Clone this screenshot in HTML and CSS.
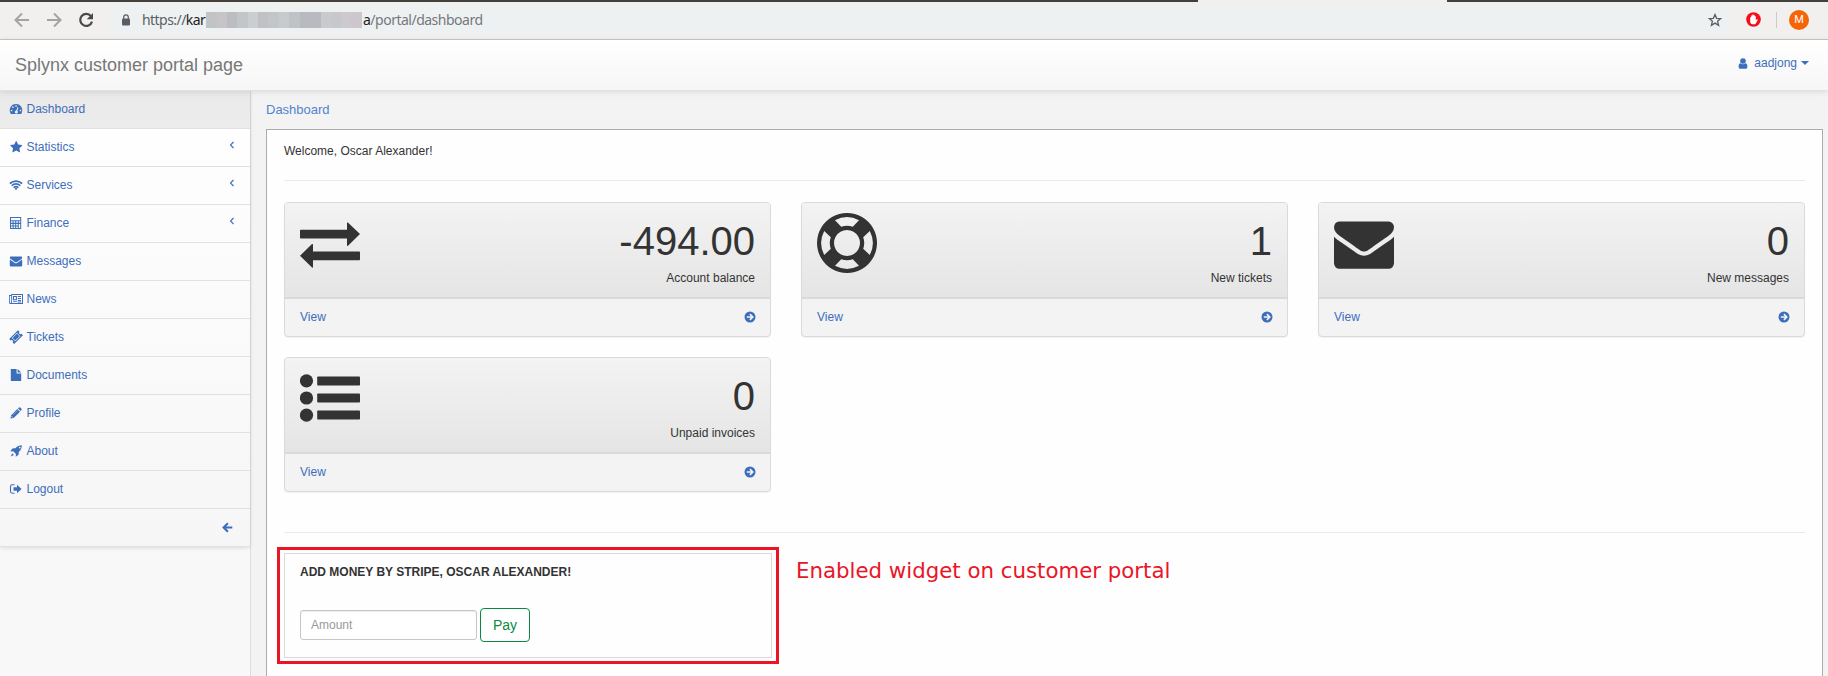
FILE: index.html
```html
<!DOCTYPE html>
<html lang="en">
<head>
<meta charset="utf-8">
<title>Splynx customer portal page</title>
<link rel="stylesheet" href="styles.css">
</head>
<body>
<svg class="defs" width="0" height="0" aria-hidden="true">
  <symbol id="go" viewBox="0 0 12 12"><circle cx="6" cy="6" r="5.5" fill="#3d6ebb"/><path d="M2.800 6H8.600M5.900 3.100 8.800 6 5.900 8.900" fill="none" stroke="#f3f3f3" stroke-width="1.600"/></symbol>
  <symbol id="chev" viewBox="0 0 6 8"><path d="M4.500 1 1.500 4l3 3" fill="none" stroke="#3d6ebb" stroke-width="1.100"/></symbol>
</svg>

<div class="tabstrip"><div class="tab-active"></div></div>
<div class="toolbar">
  <svg class="nav" width="16" height="16" viewBox="0 0 16 16"><path d="M15 8H2M8 1.500 1.500 8 8 14.500" fill="none" stroke="#a3a3a1" stroke-width="2"/></svg>
  <svg class="nav" width="16" height="16" viewBox="0 0 16 16"><path d="M1 8h13M8 1.500 14.500 8 8 14.500" fill="none" stroke="#a3a3a1" stroke-width="2"/></svg>
  <svg class="nav" width="16" height="16" viewBox="0 0 16 16"><path d="M13 4.200A6 6 0 1 0 14 9.600" fill="none" stroke="#4a4a4a" stroke-width="2.200"/><path d="M15 1v6.200H8.800Z" fill="#4a4a4a"/></svg>
  <div class="omnibox">
    <svg class="lock" width="10" height="12" viewBox="0 0 10 12"><rect x="1" y="4.500" width="8" height="7" rx="1" fill="#5a5d63"/><path d="M2.700 5V3.200a2.300 2.300 0 0 1 4.600 0V5" fill="none" stroke="#5a5d63" stroke-width="1.200"/></svg>
    <span class="url url-a">https://<b>kar</b></span>
    <span class="mosaic"></span>
    <span class="url url-b"><b>a</b>/portal/dashboard</span>
    <svg class="bookmark" width="14" height="14" viewBox="0 0 14 14"><path d="M7 1.500 8.600 5.300l4.100.300-3.100 2.700 1 4L7 10.100 3.400 12.300l1-4L1.300 5.600l4.100-.300Z" fill="none" stroke="#5a5d63" stroke-width="1.300"/></svg>
  </div>
  <svg class="blocker" width="15" height="15" viewBox="0 0 15 15"><circle cx="7.500" cy="7.500" r="7.300" fill="#f70d1a"/><path d="M4.200 5.200h1V3.400h1.200v-.800h1.200v.600h1.200v1h1v4l1.200-1.100.800.600-2 3.700q-.600.900-2 .900H6.600q-2-.100-2.400-2Z" fill="#fff"/></svg>
  <span class="sep"></span>
  <span class="avatar">M</span>
</div>

<header class="header">
  <div class="brand">Splynx customer portal page</div>
  <a class="user">
    <svg width="10" height="11" viewBox="0 0 10 11"><circle cx="5" cy="3" r="2.800" fill="#3d6ebb"/><path d="M.6 8.500Q.6 5.400 2.500 5.200 5 7.200 7.500 5.200 9.400 5.400 9.400 8.500 9.400 10.800 8 10.800H2Q.6 10.800.6 8.500Z" fill="#3d6ebb"/></svg>
    <span>aadjong</span><i class="caret"></i>
  </a>
</header>

<div class="page">
  <aside class="sidebar">
    <nav class="menu">
      <a class="item active"><svg viewBox="0 0 14 14"><path fill-rule="evenodd" d="M7 2a6.300 6.300 0 0 1 5.400 9.500q-.200.500-.700.500H2.300q-.500 0-.700-.500A6.300 6.300 0 0 1 7 2ZM6.300 3.200v1.600h1.500V3.200ZM3.200 4.600v1.500h1.500V4.600ZM1.800 7.700v1.500h1.500V7.700ZM10.700 7.700v1.500h1.500V7.700ZM8.600 5.100 7.200 8.600a1.500 1.500 0 1 0 1.100.300l1.200-3.500Z"/></svg><span>Dashboard</span></a>
      <a class="item"><svg viewBox="0 0 1792 1792"><path d="M1728 647q0 22-26 48l-363 354 86 500q1 7 1 20 0 21-10.500 35.500t-30.500 14.500q-19 0-40-12l-449-236-449 236q-22 12-40 12-21 0-31.500-14.500t-10.500-35.500q0-6 2-20l86-500-364-354q-25-27-25-48 0-37 56-46l502-73 225-455q19-41 49-41t49 41l225 455 502 73q56 9 56 46z" transform="translate(100 90) scale(.92)"/></svg><span>Statistics</span><svg class="chev"><use href="#chev"/></svg></a>
      <a class="item"><svg viewBox="0 0 14 14"><path d="M.8 5.500Q7 .6 13.200 5.500M2.700 7.600Q7 4.200 11.300 7.600M4.600 9.600Q7 7.600 9.400 9.600" fill="none" stroke="#3d6ebb" stroke-width="1.700"/><path d="M5.500 10.600Q7 9.600 8.500 10.600L7 12.200Z"/></svg><span>Services</span><svg class="chev"><use href="#chev"/></svg></a>
      <a class="item"><svg viewBox="0 0 14 14"><path fill-rule="evenodd" d="M1 1h11.200v12H1ZM2 2v2.300h9.200V2ZM2 5.300v1.500h1.600V5.300ZM4.600 5.300v1.500h1.600V5.300ZM7.200 5.300v1.500h1.600V5.300ZM9.800 5.300v1.500h1.400V5.300ZM2 7.900v1.500h1.600V7.900ZM4.600 7.900v1.500h1.600V7.900ZM7.200 7.900v1.500h1.600V7.900ZM2 10.500V12h1.600v-1.500ZM4.600 10.500V12h1.600v-1.500ZM7.200 10.500V12h1.600v-1.500ZM9.800 7.900V12h1.400V7.900Z"/></svg><span>Finance</span><svg class="chev"><use href="#chev"/></svg></a>
      <a class="item"><svg viewBox="0 0 14 14"><path d="M.8 5.600 5.500 8.800Q7 9.800 8.500 8.800L13.200 5.600V11.500q0 1-1 1H1.800q-1 0-1-1ZM.8 3.800Q.8 2.500 1.800 2.500H12.200q1 0 1 1.200 0 .8-1 1.500L8 7.900Q7 8.600 6 7.900L1.800 5.100Q.8 4.400.8 3.800Z"/></svg><span>Messages</span></a>
      <a class="item"><svg viewBox="0 0 14 14"><path fill-rule="evenodd" d="M2.200 2H14v9.500q0 .5-.5.500H1.500Q0 12 0 10.500V3H2.200ZM3 3v8H13V3ZM.8 4v6.600q.6.800 1.400 0V4ZM3.900 4h4v4.200h-4ZM5 5v2.200h1.900V5ZM8.800 4H12v1H8.800ZM8.800 6H12v1H8.800ZM8.800 8H12v1H8.800ZM3.900 9.200H7.900v.9h-4ZM8.800 9.600H12v.9H8.800Z"/></svg><span>News</span></a>
      <a class="item"><svg viewBox="0 0 14 14"><g transform="rotate(-45 7 7)"><path fill-rule="evenodd" d="M.8 3.600H13.200V5.700A1.400 1.400 0 0 0 13.200 8.500V10.600H.8V8.500A1.400 1.400 0 0 0 .8 5.700ZM3.400 4.700v4.800h7.200V4.700Z"/><path d="M3.900 5.200h6.200v3.800H3.900Z"/></g></svg><span>Tickets</span></a>
      <a class="item"><svg viewBox="0 0 14 14"><path d="M1.800 1H7.600V5.400H12.200V12.400q0 .6-.6.600H2.400Q1.800 13 1.800 12.400ZM8.600 1 12.200 4.500H8.600Z"/></svg><span>Documents</span></a>
      <a class="item"><svg viewBox="0 0 14 14"><path d="M1.500 12.500 2 9.400 8.300 3.100 11 5.700 4.700 12ZM9 2.400 10 1.500q.7-.5 1.300.100L12.400 2.700q.6.600.1 1.200L11.600 5Z"/><path d="M2.600 10.300 3.800 11.500" stroke="#fafafa" stroke-width=".9"/><path d="M4.300 8.700 8.500 4.500" stroke="#9db7e0" stroke-width=".6"/></svg><span>Profile</span></a>
      <a class="item"><svg viewBox="0 0 14 14"><path fill-rule="evenodd" d="M12.800 1.200Q13 5 9.800 8L9.600 10.800 6.700 12.800 6.900 10 4.200 7.300 1.300 7.500 3.300 4.600 6.200 4.300Q9 1 12.800 1.200ZM10.700 2.700a.8.800 0 1 0 .1 0ZM3.200 9.200 4.900 10.900 1.800 12.400Z"/></svg><span>About</span></a>
      <a class="item"><svg viewBox="0 0 14 14"><path d="M5.600 2.700H3.400Q1.500 2.700 1.500 4.500V9.300Q1.500 11.200 3.400 11.200H5.600" fill="none" stroke="#3d6ebb" stroke-width="1.100"/><path d="M4.500 5.200H8V2.700L12.600 7 8 11.300V8.800H4.500Z"/></svg><span>Logout</span></a>
      <a class="item collapse"><svg viewBox="0 0 11 11"><path d="M10.300 5.500H2M5.900 1.200 1.600 5.500 5.900 9.800" fill="none" stroke="#3d6ebb" stroke-width="2.100"/></svg></a>
    </nav>
  </aside>

  <main class="main">
    <div class="crumb">Dashboard</div>
    <section class="content">
      <div class="welcome">Welcome, Oscar Alexander!</div>
      <div class="cards">
        <article class="card">
          <div class="card-body">
            <svg class="big" viewBox="0 0 60 60"><path d="M0 17.500q0-.8.800-.8H47V10q0-.9.900-.5L60 21 48 32.700q-1 .6-1-.5V25.500H.8Q0 25.500 0 24.700ZM60 39.200q0-.8-.8-.8H13V31.700q0-1.100-1-.6L0 42.800 12 54.500q1 .6 1-.5V47.200H59.200q.8 0 .8-.8Z"/></svg>
            <div class="stat"><div class="num">-494.00</div><div class="lbl">Account balance</div></div>
          </div>
          <a class="card-foot"><span>View</span><svg width="12" height="12"><use href="#go"/></svg></a>
        </article>
        <article class="card">
          <div class="card-body">
            <svg class="big" viewBox="0 0 60 60"><path fill-rule="evenodd" d="M30 0a30 30 0 1 0 .01 0ZM30 17a13 13 0 1 0 .01 0ZM18 7.200A26 26 0 0 1 42 7.200L35.800 13.800A17 17 0 0 0 24.200 13.800ZM52.800 18A26 26 0 0 1 52.800 42L46.200 35.800A17 17 0 0 0 46.200 24.200ZM42 52.800A26 26 0 0 1 18 52.800L24.200 46.200A17 17 0 0 0 35.800 46.200ZM7.200 42A26 26 0 0 1 7.200 18L13.800 24.200A17 17 0 0 0 13.800 35.800Z"/></svg>
            <div class="stat"><div class="num">1</div><div class="lbl">New tickets</div></div>
          </div>
          <a class="card-foot"><span>View</span><svg width="12" height="12"><use href="#go"/></svg></a>
        </article>
        <article class="card">
          <div class="card-body">
            <svg class="big" viewBox="0 0 1792 1792"><path d="M1792 710v794q0 66-47 113t-113 47h-1472q-66 0-113-47t-47-113v-794q44 49 101 87 362 246 497 345 57 42 92.500 65.500t94.500 48 110 24.500h2q51 0 110-24.500t94.500-48 92.500-65.500q170-123 498-345 57-39 100-87zm0-294q0 79-49 151t-122 123q-376 261-468 325-10 7-42.500 31t-54 38.500-52 32.500-57.500 27-50 9h-2q-23 0-50-9t-57.500-27-52-32.500-54-38.500-42.500-31q-91-64-262-182.500t-205-142.500q-62-42-117-115.500t-55-136.500q0-78 41.500-130t118.500-52h1472q65 0 112.500 47t47.500 113z"/></svg>
            <div class="stat"><div class="num">0</div><div class="lbl">New messages</div></div>
          </div>
          <a class="card-foot"><span>View</span><svg width="12" height="12"><use href="#go"/></svg></a>
        </article>
        <article class="card">
          <div class="card-body">
            <svg class="big" viewBox="0 0 60 60"><circle cx="6.500" cy="12.800" r="6.600"/><circle cx="6.500" cy="30" r="6.600"/><circle cx="6.500" cy="47.200" r="6.600"/><rect x="17.200" y="8.500" width="42.800" height="9" rx=".8"/><rect x="17.200" y="25.500" width="42.800" height="9" rx=".8"/><rect x="17.200" y="42.500" width="42.800" height="9" rx=".8"/></svg>
            <div class="stat"><div class="num">0</div><div class="lbl">Unpaid invoices</div></div>
          </div>
          <a class="card-foot"><span>View</span><svg width="12" height="12"><use href="#go"/></svg></a>
        </article>
      </div>
      <div class="widget-row">
        <div class="highlight">
          <div class="widget">
            <div class="widget-title">ADD MONEY BY STRIPE, OSCAR ALEXANDER!</div>
            <div class="form"><input class="amount" type="text" placeholder="Amount"><button class="pay" type="button">Pay</button></div>
          </div>
        </div>
        <div class="note">Enabled widget on customer portal</div>
      </div>
    </section>
  </main>
</div>
</body>
</html>
```
FILE: styles.css
```css
* { box-sizing: border-box; }
body {
  margin: 0;
  width: 1828px;
  height: 676px;
  overflow: hidden;
  display: flex;
  flex-direction: column;
  background: #f3f3f3;
  color: #333;
  font: 12px/17px "Liberation Sans", Arial, sans-serif;
}
svg { display: block; flex: none; }
.defs { position: absolute; }

/* browser chrome */
.tabstrip { height: 2px; flex: none; background: #42403a; padding-left: 1198px; }
.tab-active { width: 249px; height: 2px; background: #f1f0ee; }
.toolbar {
  height: 38px;
  flex: none;
  display: flex;
  align-items: center;
  padding: 0 19px 2px 14px;
  background: #f1f0ee;
  border-bottom: 1px solid #c6c6c4;
}
.nav { margin-right: 16px; }
.omnibox {
  width: 1623px;
  height: 28px;
  margin-left: -2px;
  display: flex;
  align-items: center;
  padding: 0 9px 0 13px;
  border-radius: 14px;
  background: #eef1f2;
}
.url { font: 14px/20px "Noto Sans", sans-serif; color: #75787d; white-space: nowrap; }
.url b { font-weight: 400; color: #222; }
.url-a { width: 64px; margin-left: 11px; overflow: hidden; color: #5c5f64; letter-spacing: -.55px; }
.url-b { margin-left: 1px; letter-spacing: -.5px; }
.mosaic {
  width: 156px;
  height: 16px;
  background: linear-gradient(90deg, #c2c3c5 0 7%, #c7c4c6 7% 13.500%, #bcbdc0 13.500% 20%, #c3c6c9 20% 27%, #cccdcf 27% 33.500%, #bfc1c4 33.500% 40%, #c3c5c7 40% 47%, #c8cbcd 47% 53.500%, #bfc3c6 53.500% 60%, #b9babf 60% 73.500%, #c9cacc 73.500% 80%, #c6c8cb 80% 87%, #cdc9cd 87% 93%, #cbc7cc 93%);
}
.bookmark { margin-left: auto; }
.blocker { margin-left: 15px; }
.sep { width: 1px; height: 16px; margin-left: 15px; background: #cbcbca; }
.avatar {
  width: 20px;
  height: 20px;
  margin-left: 12px;
  border-radius: 50%;
  background: #f56505;
  color: #fff;
  font: 11px/20px Roboto, sans-serif;
  text-align: center;
}

/* portal header */
.header {
  position: relative;
  height: 51px;
  flex: none;
  display: flex;
  justify-content: space-between;
  align-items: center;
  padding: 0 19px 0 15px;
  background: linear-gradient(#fff, #f6f6f6);
  border-bottom: 1px solid #e1e1e1;
  box-shadow: 0 1px 6px rgba(0, 0, 0, .1);
}
.brand { font-size: 18px; line-height: 20px; color: #777; }
.user { display: flex; align-items: center; padding-bottom: 4px; color: #3d6ebb; }
.user span { margin-left: 6px; }
.caret { margin-left: 4px; border: 4px solid transparent; border-top-color: #3d6ebb; border-bottom: 0; }

.page { flex: 1; display: flex; min-height: 0; }
.sidebar { width: 251px; background: #f8f8f8; border-right: 1px solid #ddd; }
.menu { background: linear-gradient(#fff, #f6f6f6); box-shadow: 0 1px 4px rgba(0, 0, 0, .12); border-radius: 0 0 4px 4px; }
.item {
  height: 38px;
  display: flex;
  align-items: center;
  padding: 0 15px 0 9px;
  border-bottom: 1px solid #e1e1e1;
  color: #3d6ebb;
}
.item > svg { width: 14px; height: 14px; margin: 0 0 1px -.5px; fill: #3d6ebb; }
.item span { margin-left: 4px; }
.active { background: linear-gradient(#e9e9e9, #ececec); }
.item > .chev { width: 6px; height: 8px; margin: 0 0 5px auto; }
.collapse { justify-content: flex-end; padding-right: 17px; }
.collapse > svg { width: 11px; height: 11px; }

.main { flex: 1; display: flex; flex-direction: column; padding: 0 5px 0 15px; }
.crumb { height: 38px; flex: none; padding-top: 10px; font-size: 13px; color: #5283cf; }
.content {
  flex: 1;
  padding: 13px 17px 0;
  background: #fefefe;
  border: 1px solid #acacac;
  border-bottom: 0;
}
.welcome { height: 38px; border-bottom: 1px solid #eaeaea; }
.cards {
  display: grid;
  grid-template-columns: repeat(3, 487px);
  gap: 20px 30px;
  padding: 21px 0 40px;
  border-bottom: 1px solid #eaeaea;
}
.card {
  height: 135px;
  overflow: hidden;
  border: 1px solid #dadada;
  border-radius: 4px;
  background: #f3f3f3;
  box-shadow: 0 1px 1px rgba(0, 0, 0, .05);
}
.card-body {
  height: 96px;
  display: flex;
  justify-content: space-between;
  padding: 9px 15px 0;
  background: linear-gradient(#f3f3f3, #e5e5e5);
  border-bottom: 2px solid #dadada;
}
.big { width: 60px; height: 60px; margin-top: .5px; fill: #333; }
.stat { padding-top: 9px; text-align: right; }
.num { font-size: 40px; line-height: 40px; }
.lbl { margin-top: 9px; }
.card-foot { height: 36px; display: flex; justify-content: space-between; align-items: center; padding: 0 14px 0 15px; color: #3d6ebb; }

.widget-row { display: flex; padding-top: 14px; }
.highlight { width: 502px; height: 117px; margin-left: -7px; padding: 3px 4px; border: 3px solid #ea1526; flex: none; }
.widget { height: 105px; padding: 10px 15px 0; border: 1px solid #dadada; }
.widget-title { font-weight: 700; }
.form { display: flex; align-items: center; margin-top: 27px; gap: 3px; }
.amount {
  width: 177px;
  height: 30px;
  padding: 0 10px;
  border: 1px solid #c6c6c6;
  border-radius: 3px;
  background: #fff;
  font: 12px "Liberation Sans", Arial, sans-serif;
  box-shadow: inset 0 1px 1px rgba(0, 0, 0, .075);
}
.amount::placeholder { color: #999; }
.pay {
  width: 50px;
  height: 34px;
  padding: 0;
  border: 1px solid #0a8a40;
  border-radius: 4px;
  background: #fff;
  color: #0a8a40;
  font: 14px "Liberation Sans", Arial, sans-serif;
}
.note { margin: 11px 0 0 17px; font: 21.300px/26px "DejaVu Sans", sans-serif; color: #ea1526; white-space: nowrap; }
```
